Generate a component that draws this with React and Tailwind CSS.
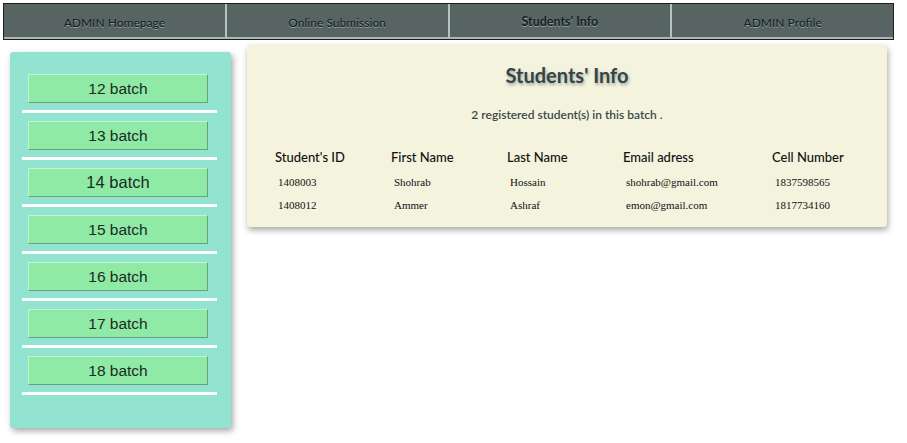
import React from "react";

const navItems = ["ADMIN Homepage", "Online Submission", "Students' Info", "ADMIN Profile"];
const batches = ["12 batch", "13 batch", "14 batch", "15 batch", "16 batch", "17 batch", "18 batch"];
const rows = [
  ["1408003", "Shohrab", "Hossain", "shohrab@gmail.com", "1837598565"],
  ["1408012", "Ammer", "Ashraf", "emon@gmail.com", "1817734160"],
];
const heads = ["Student's ID", "First Name", "Last Name", "Email adress", "Cell Number"];

export default function App() {
  return (
    <div className="w-[907px] h-[443px] bg-white overflow-hidden" style={{ fontFamily: "Lato, 'Open Sans', sans-serif" }}>
      <div className="ml-[3px] mt-[3px] w-[891px] h-[37px] border border-[#1a1f1f] bg-[#586462] flex">
        {navItems.map((t, i) => (
          <div
            key={t}
            className={`flex-1 flex items-center justify-center border-b-[2px] border-b-[#aab8b5] ${i < 3 ? "border-r-[2px] border-r-[#b4c3bf]" : ""} ${i === 2 ? "text-[12.5px] font-bold" : "text-[12px] font-medium"} text-[#142222] [text-shadow:0_1px_0_rgba(190,210,205,0.55)]`}
          >
            <span className="mt-[4px]">{t}</span>
          </div>
        ))}
      </div>

      <div className="flex items-start">
        <div className="ml-[10px] mt-[12px] w-[221px] h-[376px] bg-[#92e4d1] rounded-[3px] shadow-[2px_3px_6px_rgba(0,0,0,0.35)] pt-[22px] flex flex-col">
          {batches.map((b) => (
            <div key={b} className="flex flex-col">
              <div
                className={`ml-[18px] w-[180px] h-[29px] bg-[#8feaa6] border border-t-[#bff5cf] border-l-[#bff5cf] border-b-[#6a9e7c] border-r-[#6a9e7c] flex items-center justify-center text-[#1b2a22] ${b === "14 batch" ? "text-[16.5px]" : "text-[15.5px]"}`}
                style={{ fontFamily: "'Liberation Sans', Arial, sans-serif" }}
              >
                {b}
              </div>
              <div className="ml-[12px] mt-[7px] mb-[8px] w-[195px] h-[3px] bg-white" />
            </div>
          ))}
        </div>

        <div className="ml-[16px] mt-[5px] w-[640px] h-[182px] bg-[#f4f3dd] rounded-[3px] shadow-[1px_3px_6px_rgba(0,0,0,0.35)] flex flex-col">
          <div className="mt-[17px] text-center text-[20px] font-bold text-[#34454a] leading-[26px] [text-shadow:1px_2px_3px_rgba(60,80,80,0.45)]">
            Students' Info
          </div>
          <div className="mt-[19px] text-center text-[12px] font-semibold text-[#3c4a4a] leading-[16px]">
            2 registered student(s) in this batch .
          </div>
          <div className="mt-[25px] ml-[28px] grid grid-cols-[116px_116px_116px_149px_120px]">
            {heads.map((h) => (
              <div key={h} className="text-[13px] font-medium text-[#111] leading-[18px]">{h}</div>
            ))}
          </div>
          {rows.map((r, i) => (
            <div key={i} className={`${i === 0 ? "mt-[9px]" : "mt-[9px]"} ml-[31px] grid grid-cols-[116px_116px_116px_149px_120px]`}>
              {r.map((c, j) => (
                <div key={j} className="text-[11px] text-[#111] leading-[14px]" style={{ fontFamily: "'Liberation Serif', 'Times New Roman', serif" }}>
                  {c}
                </div>
              ))}
            </div>
          ))}
        </div>
      </div>
    </div>
  );
}
